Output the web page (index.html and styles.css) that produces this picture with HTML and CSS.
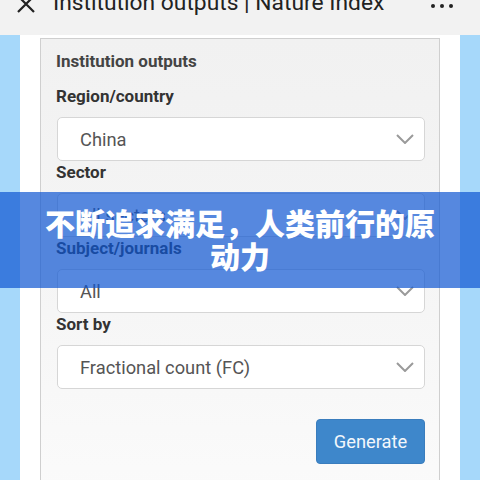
FILE: index.html
```html
<!DOCTYPE html>
<html>
<head>
<meta charset="utf-8">
<link rel="stylesheet" href="styles.css">
</head>
<body>
<div class="screen">
  <div class="topbar">
    <svg class="close" width="20" height="20" viewBox="0 0 20 20"><path d="M2 2 L18 18 M18 2 L2 18" stroke="#222" stroke-width="2.2" fill="none"/></svg>
    <div class="title">Institution outputs | Nature Index</div>
    <div class="dots"><span></span><span></span><span></span></div>
  </div>
  <div class="panel">
    <div class="card">
      <div class="card-title">Institution outputs</div>
      <div class="label">Region/country</div>
      <div class="select"><span>China</span><svg class="chev" width="18" height="10" viewBox="0 0 18 10"><path d="M1 1 L9 9 L17 1" stroke="#9a9a9a" stroke-width="2" fill="none"/></svg></div>
      <div class="label">Sector</div>
      <div class="select"><span>All sectors</span><svg class="chev" width="18" height="10" viewBox="0 0 18 10"><path d="M1 1 L9 9 L17 1" stroke="#9a9a9a" stroke-width="2" fill="none"/></svg></div>
      <div class="label">Subject/journals</div>
      <div class="select"><span>All</span><svg class="chev" width="18" height="10" viewBox="0 0 18 10"><path d="M1 1 L9 9 L17 1" stroke="#9a9a9a" stroke-width="2" fill="none"/></svg></div>
      <div class="label">Sort by</div>
      <div class="select"><span>Fractional count (FC)</span><svg class="chev" width="18" height="10" viewBox="0 0 18 10"><path d="M1 1 L9 9 L17 1" stroke="#9a9a9a" stroke-width="2" fill="none"/></svg></div>
      <div class="actions"><button class="btn">Generate</button></div>
    </div>
  </div>
  <div class="banner">不断追求满足，人类前行的原动力</div>
</div>
</body>
</html>
```
FILE: styles.css
```css
html, body { margin: 0; padding: 0; }
body { width: 480px; height: 480px; overflow: hidden; background: #a6d8fa; font-family: Roboto, "Noto Sans", sans-serif; }
.screen { position: relative; width: 480px; height: 480px; overflow: hidden; }
.topbar { height: 35px; background: #f2f2f2; display: flex; align-items: flex-start; overflow: hidden; }
.close { margin: -6px 0 0 16px; flex: none; }
.title { margin: -12px 0 0 17px; font-size: 22.8px; line-height: 30px; color: #222; white-space: nowrap; flex: 1; }
.dots { display: flex; gap: 5px; margin: 4px 27px 0 0; }
.dots span { width: 4px; height: 4px; border-radius: 50%; background: #222; }
.panel { background: #fff; margin: 0 20px; padding: 3px 20px 0; height: 445px; }
.card { border: 1px solid #cfcfcf; background: linear-gradient(#f1f1f1, #f5f5f5 50%, #fbfbfb); padding: 12px 14px 0 15px; height: 470px; box-sizing: border-box; }
.card-title { font-size: 17px; font-weight: 700; color: #444; line-height: 20px; margin-bottom: 15px; }
.label { font-size: 17px; font-weight: 700; color: #333; line-height: 20px; margin-bottom: 11px; }
.select { height: 44px; box-sizing: border-box; border: 1px solid #d6d6d6; border-radius: 5px; background: #fff; margin: 0 0 1px 1px; display: flex; align-items: center; justify-content: space-between; padding: 0 10px 0 22px; font-size: 18.3px; color: #555; }
.chev { flex: none; }
.actions { display: flex; justify-content: flex-end; margin-top: 30px; }
.btn { width: 109px; height: 45px; background: #3e87cb; border: 1px solid #3a7dbd; border-radius: 4px; color: #f2f7fc; font-family: Roboto, sans-serif; font-size: 18.3px; padding: 0; }
.banner { position: absolute; left: 0; top: 192px; width: 480px; height: 96px; box-sizing: border-box; padding: 14px 40px 0; background: rgba(14, 85, 210, 0.7); color: #fff; font-family: "Noto Sans CJK SC", sans-serif; font-weight: 900; font-size: 30px; line-height: 33px; text-align: center; }
```
